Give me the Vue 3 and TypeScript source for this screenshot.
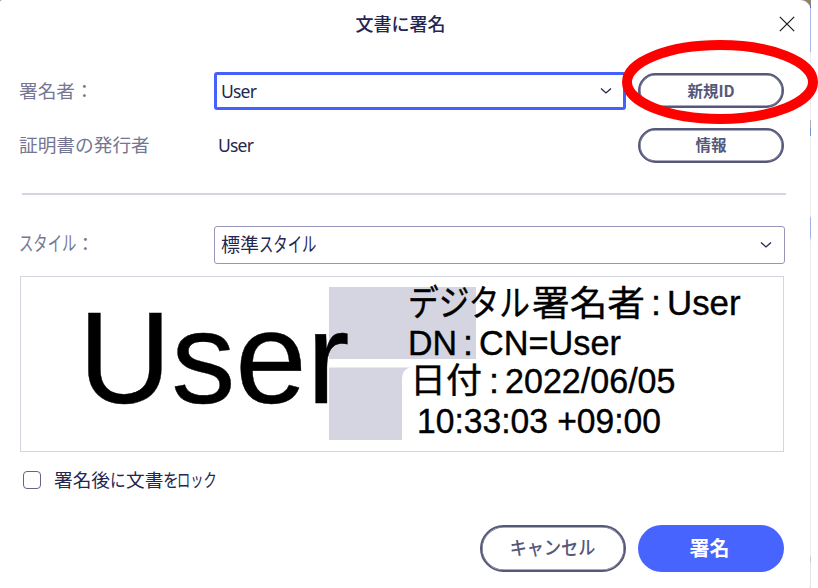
<script setup lang="ts">
import { ref } from 'vue'

interface SignatureText {
  text: string
  x: number
  y: number
  width: number
  size: number
}

const locked = ref(false)

const signature: SignatureText[] = [
  { text: 'User', x: 57.5, y: 125.5, width: 271, size: 130 },
  { text: 'デジタル', x: 387, y: 38.5, width: 122, size: 36 },
  { text: '署名者', x: 511, y: 38.5, width: 113, size: 35 },
  { text: ':', x: 630, y: 38, width: 10, size: 34.5 },
  { text: 'User', x: 646, y: 38, width: 73.5, size: 34.5 },
  { text: 'DN', x: 387, y: 78, width: 49, size: 34.5 },
  { text: ':', x: 442, y: 78, width: 10, size: 34.5 },
  { text: 'CN=User', x: 458, y: 78, width: 142, size: 34.5 },
  { text: '日付', x: 389, y: 116, width: 72, size: 35 },
  { text: ':', x: 468, y: 116, width: 10, size: 34.5 },
  { text: '2022/06/05', x: 484, y: 116, width: 170.5, size: 34.5 },
  { text: '10:33:03 +09:00', x: 396, y: 155.5, width: 244, size: 34.5 },
]
</script>

<template>
  <div class="screen">
    <main class="dialog">
      <header class="header">
        <h1 class="title">文書に署名</h1>
        <button class="close" aria-label="閉じる">
          <svg viewBox="0 0 16 16"><path d="M.8.8 15.2 15.2M15.2.8.8 15.2" /></svg>
        </button>
      </header>

      <section class="fields">
        <span class="label">署名者：</span>
        <div class="combo focused">
          <span class="latin">User</span>
          <svg class="chevron" viewBox="0 0 12 8"><path d="M1 1.5 6 6 11 1.5" /></svg>
        </div>
        <button class="pill small">新規ID</button>
        <span class="label">証明書の発行者</span>
        <span class="issuer latin">User</span>
        <button class="pill small">情報</button>
      </section>

      <hr class="divider" />

      <section class="style-row">
        <span class="label"><span class="kana">スタイル</span>：</span>
        <div class="combo">
          <span class="value">標準<span class="kana">スタイル</span></span>
          <svg class="chevron" viewBox="0 0 12 8"><path d="M1 1.5 6 6 11 1.5" /></svg>
        </div>
      </section>

      <section class="preview">
        <svg viewBox="0 0 762 174">
          <path class="mark" d="M308 10H455V82H308ZM308 90.5H391Q381 91 381 103V163H308Z" />
          <text
            v-for="(item, i) in signature"
            :key="i"
            :x="item.x"
            :y="item.y"
            :font-size="item.size"
            :textLength="item.width"
            lengthAdjust="spacingAndGlyphs"
          >{{ item.text }}</text>
        </svg>
      </section>

      <label class="lock">
        <input v-model="locked" type="checkbox" />
        <span>署名後<span class="ni">に</span>文書<span class="wo">を</span><span class="rokku">ロック</span></span>
      </label>

      <footer class="footer">
        <button class="pill"><span class="cancel">キャンセル</span></button>
        <button class="pill primary">署名</button>
      </footer>
    </main>
    <div class="edge"></div>
    <svg class="highlight" viewBox="0 0 196 86">
      <ellipse cx="98" cy="43" rx="93" ry="37" />
    </svg>
  </div>
</template>

<style>
body {
  background: #fff;
  overflow: hidden;
}
</style>

<style scoped>
.screen {
  position: relative;
  width: 818px;
  height: 588px;
  overflow: hidden;
  background: linear-gradient(to right, #8d8271 811px, #fff 811px);
  font-family: "Noto Sans CJK JP", sans-serif;
  font-size: 19px;
  color: #24264f;
}
.dialog {
  box-sizing: border-box;
  width: 811px;
  height: 588px;
  padding: 0 26px 0 20px;
  border-radius: 2px 11px 2px 0;
  background: #fff;
  display: flex;
  flex-direction: column;
}
.edge {
  position: absolute;
  left: 810px;
  top: 6px;
  width: 1px;
  height: 582px;
  background: linear-gradient(
    #4a65e8 2px, #a9b5e8 2px 46px, #ececf1 46px 114px, #a3adbd 114px 122px,
    #7795c8 122px 130px, #ececf1 130px 210px, #a5b0e8 212px 231px,
    #ececf1 235px 550px, #c5c8d2 551px 555px, #e4e4ea 557px
  );
}
button {
  font-family: inherit;
  padding: 0;
}
.header {
  height: 71px;
  flex: none;
  display: grid;
  grid-template-columns: 1fr 6px;
  align-items: start;
}
.title {
  margin: 10px 0 0 2px;
  text-align: center;
  font-size: 18px;
  line-height: 26px;
  font-weight: 500;
}
.close {
  width: 16px;
  height: 16px;
  margin: 16px 0 0;
  border: 0;
  background: none;
}
.close svg {
  display: block;
  width: 16px;
  height: 16px;
  fill: none;
  stroke: #17171c;
  stroke-width: 1.2;
}
.fields {
  flex: none;
  display: grid;
  grid-template-columns: 194px 412px 146px;
  grid-template-rows: 39px 36px;
  row-gap: 17px;
  align-items: center;
}
.fields .pill {
  margin-left: 12px;
}
.label {
  margin: 0 0 2px -1px;
  color: #747693;
  font-weight: 400;
  font-size: 18.7px;
  line-height: 24px;
  white-space: nowrap;
}
.issuer {
  padding-left: 4px;
}
.combo {
  box-sizing: border-box;
  height: 38px;
  padding: 0 12px 0 6px;
  border: 1.5px solid #9796b8;
  border-radius: 3px;
  display: flex;
  align-items: center;
  justify-content: space-between;
  white-space: nowrap;
}
.combo.focused {
  height: 38px;
  width: 412px;
  padding: 0 11px 0 4px;
  border: 3px solid #4560fc;
}
.value {
  padding-bottom: 3px;
}
.latin {
  font-family: "Noto Sans", sans-serif;
  font-size: 17.5px;
  letter-spacing: -0.8px;
}
.chevron {
  width: 12px;
  height: 8px;
  fill: none;
  stroke: #24264f;
  stroke-width: 1.3;
}
.pill {
  box-sizing: border-box;
  width: 146px;
  height: 47px;
  border: 2px solid #555879;
  border-radius: 24px;
  box-shadow: inset 0 0 0 0.6px #555879;
  background: #fff;
  color: #555879;
  font-size: 19px;
  font-weight: 500;
  line-height: 1;
}
.pill.small {
  height: 35px;
  font-size: 15.5px;
  font-weight: 700;
}
.pill.primary {
  border: 0;
  box-shadow: none;
  background: #4864ff;
  color: #fff;
  font-size: 20px;
  font-weight: 700;
  padding: 0 3px 2px 0;
}
.divider {
  flex: none;
  width: 764px;
  height: 2px;
  margin: 30px 0 31px 2px;
  border: 0;
  background: #d5d5e2;
}
.style-row {
  flex: none;
  display: grid;
  grid-template-columns: 194px 571px;
  height: 38px;
  align-items: center;
}
.style-row .label {
  margin-bottom: 5px;
}
.kana {
  display: inline-block;
  width: 57px;
  font-size: 20.5px;
  line-height: 24px;
  transform: scaleX(0.7);
  transform-origin: left;
}
.preview {
  box-sizing: border-box;
  flex: none;
  width: 764px;
  height: 176px;
  margin-top: 12px;
  border: 1.5px solid #d5d5e2;
}
.preview svg {
  display: block;
  width: 762px;
  height: 174px;
}
.preview text {
  font-family: "Liberation Sans", "Noto Sans CJK JP", sans-serif;
  fill: #000;
  stroke: #000;
  stroke-width: 0.4;
}
.mark {
  fill: #d5d5e1;
}
.lock {
  flex: none;
  margin: 14px 0 0 3px;
  height: 28px;
  display: flex;
  align-items: center;
  gap: 13px;
  font-size: 18.7px;
  font-weight: 400;
  white-space: nowrap;
}
.lock > span {
  padding-bottom: 3px;
}
.lock input {
  appearance: none;
  box-sizing: border-box;
  width: 18px;
  height: 18px;
  margin: 0;
  border: 1.5px solid #62647f;
  border-radius: 4px;
}
.ni,
.wo,
.rokku {
  display: inline-block;
  transform: scaleX(0.84);
  transform-origin: left;
}
.ni {
  width: 16px;
}
.wo {
  width: 14px;
}
.rokku {
  transform: scaleX(0.71);
}
.footer {
  flex: none;
  margin-top: 31px;
  padding-right: 1px;
  display: flex;
  justify-content: flex-end;
  gap: 12px;
}
.cancel {
  display: inline-block;
  margin: -2px -10px 0;
  transform: translateY(-2px) scaleX(0.9);
}
.highlight {
  position: absolute;
  left: 622px;
  top: 39px;
  width: 196px;
  height: 86px;
  fill: none;
  stroke: #fe0000;
  stroke-width: 10;
}
</style>
